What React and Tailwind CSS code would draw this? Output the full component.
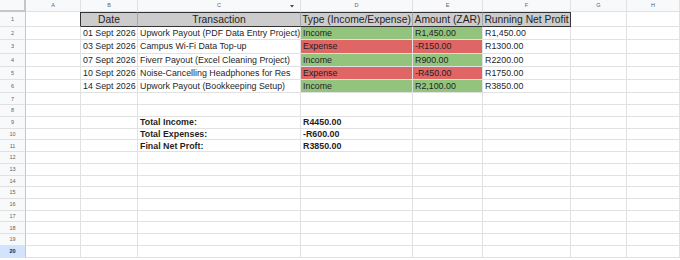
import React from "react";

const COLS = "grid grid-cols-[26px_55px_57px_163px_112px_70px_88px_56px_1fr]";
const FONT = { fontFamily: '"Liberation Sans", Arial, sans-serif' };

const data = [
  ["01 Sept 2026", "Upwork Payout (PDF Data Entry Project)", "Income", "R1,450.00", "R1,450.00"],
  ["03 Sept 2026", "Campus Wi-Fi Data Top-up", "Expense", "-R150.00", "R1300.00"],
  ["07 Sept 2026", "Fiverr Payout (Excel Cleaning Project)", "Income", "R900.00", "R2200.00"],
  ["10 Sept 2026", "Noise-Cancelling Headphones for Res", "Expense", "-R450.00", "R1750.00"],
  ["14 Sept 2026", "Upwork Payout (Bookkeeping Setup)", "Income", "R2,100.00", "R3850.00"],
];

const totals = [
  ["Total Income:", "R4450.00"],
  ["Total Expenses:", "-R600.00"],
  ["Final Net Proft:", "R3850.00"],
];

function RowNum({ n, active }) {
  return (
    <div
      className={
        "flex items-center justify-center border-r border-b border-r-[#c4c7c5] border-b-[#e1e1e1] text-[5.5px] " +
        (active ? "bg-[#d3e3fd] text-[#0b1f44] font-bold" : "bg-[#f8f9fa] text-[#5f6368]")
      }
    >
      {n}
    </div>
  );
}

function Cell({ children, className = "" }) {
  return (
    <div
      className={
        "flex items-end overflow-hidden whitespace-nowrap border-r border-b border-[#e1e1e1] px-[2px] leading-[1.15] text-[8.85px] text-[#1f1f1f] " +
        className
      }
    >
      {children}
    </div>
  );
}

function EmptyRow({ n, active }) {
  return (
    <div className={COLS + " h-[11.72px]"}>
      <RowNum n={n} active={active} />
      <Cell />
      <Cell />
      <Cell />
      <Cell />
      <Cell />
      <Cell />
      <Cell />
      <Cell />
    </div>
  );
}

export default function App() {
  const letters = ["A", "B", "C", "D", "E", "F", "G", "H"];
  return (
    <div className="w-[680px] h-[260px] overflow-hidden bg-white" style={FONT}>
      {/* column header */}
      <div className={COLS + " h-[12px]"}>
        <div className="bg-[#f8f9fa] border-r-[2px] border-b-[2px] border-[#c4c7c5]" />
        {letters.map((l) => (
          <div
            key={l}
            className="relative flex items-center justify-center bg-[#f8f9fa] border-r border-b border-[#e1e1e1] text-[5.5px] text-[#5f6368]"
          >
            {l}
            {l === "C" && (
              <svg className="absolute right-[6px] top-[4.5px]" width="4" height="3" viewBox="0 0 4 3">
                <path d="M0 0 L4 0 L2 2.5 Z" fill="#444746" />
              </svg>
            )}
          </div>
        ))}
      </div>

      {/* row 1 headers */}
      <div className={COLS + " h-[15px]"}>
        <div className="flex items-center justify-center bg-[#f8f9fa] border-r border-b border-r-[#c4c7c5] border-b-[#e1e1e1] text-[5.5px] text-[#5f6368]">
          1
        </div>
        <div className="border-r border-b border-r-[#333] border-b-[#e1e1e1]" />
        {["Date", "Transaction", "Type (Income/Expense)", "Amount (ZAR)", "Running Net Profit"].map((t, i) => (
          <div
            key={t}
            className={
              "flex items-center justify-center overflow-hidden whitespace-nowrap bg-[#cccccc] border-t border-b border-t-[#333] border-b-[#333] border-r text-[10.3px] leading-[1.15] text-[#1f1f1f] " +
              (i === 4 ? "border-r-[#333]" : "border-r-[#a8a8a8]")
            }
          >
            {t}
          </div>
        ))}
        <Cell />
        <Cell />
      </div>

      {/* data rows */}
      {data.map((r, i) => {
        const inc = r[2] === "Income";
        const bg = inc ? "bg-[#93c47d]" : "bg-[#e06666]";
        return (
          <div key={i} className={COLS + " h-[13.3px]"}>
            <RowNum n={i + 2} />
            <Cell />
            <Cell className="pb-[1px]">{r[0]}</Cell>
            <Cell className="pb-[1px]">{r[1]}</Cell>
            <Cell className={bg + " pb-[1px]"}>{r[2]}</Cell>
            <Cell className={bg + " pb-[1px]"}>{r[3]}</Cell>
            <Cell className="pb-[1px]">{r[4]}</Cell>
            <Cell />
            <Cell />
          </div>
        );
      })}

      <EmptyRow n={7} />
      <EmptyRow n={8} />

      {totals.map((t, i) => (
        <div key={i} className={COLS + " h-[11.72px]"}>
          <RowNum n={i + 9} />
          <Cell />
          <Cell />
          <Cell className="font-bold">{t[0]}</Cell>
          <Cell className="font-bold">{t[1]}</Cell>
          <Cell />
          <Cell />
          <Cell />
          <Cell />
        </div>
      ))}

      {[12, 13, 14, 15, 16, 17, 18, 19].map((n) => (
        <EmptyRow key={n} n={n} />
      ))}
      <EmptyRow n={20} active />
    </div>
  );
}
